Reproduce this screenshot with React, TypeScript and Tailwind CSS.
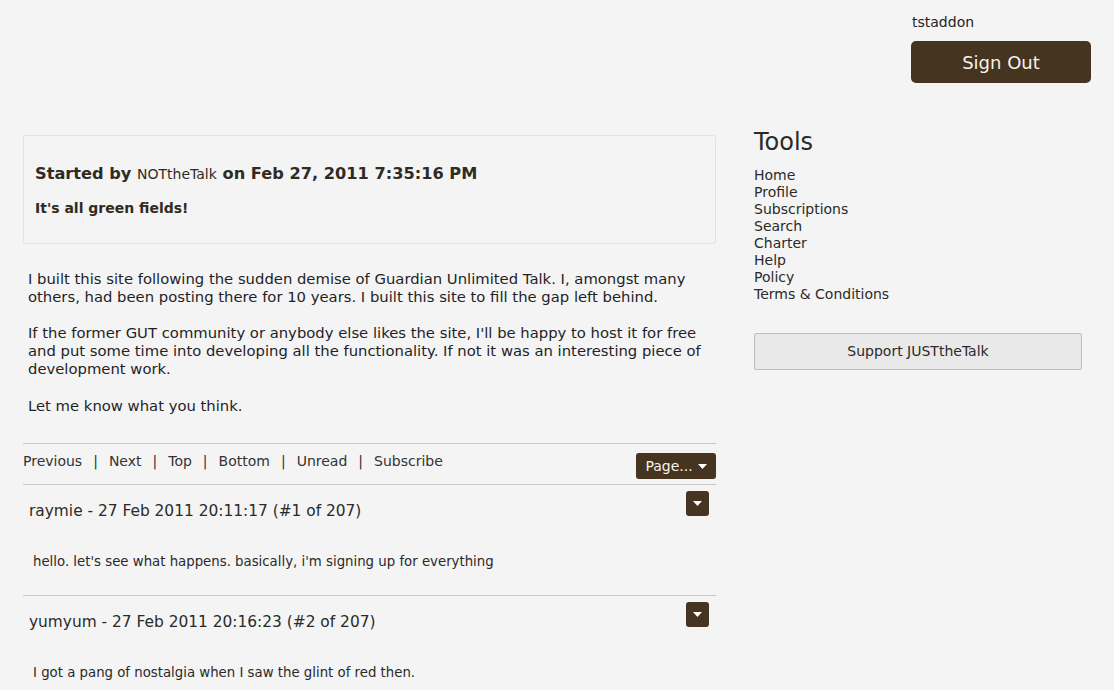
import { FC } from "react";

const Caret: FC = () => (
  <svg width="9" height="5" viewBox="0 0 9 5" className="inline-block">
    <path d="M0 0h9L4.5 5z" fill="#fff" />
  </svg>
);

const posts = [
  {
    who: "raymie",
    when: "27 Feb 2011 20:11:17",
    num: 1,
    body: "hello. let's see what happens. basically, i'm signing up for everything",
  },
  {
    who: "yumyum",
    when: "27 Feb 2011 20:16:23",
    num: 2,
    body: "I got a pang of nostalgia when I saw the glint of red then.",
  },
];

const tools = ["Home", "Profile", "Subscriptions", "Search", "Charter", "Help", "Policy", "Terms & Conditions"];
const navLinks = ["Previous", "Next", "Top", "Bottom", "Unread", "Subscribe"];

const App: FC = () => {
  return (
    <div
      className="min-h-[690px] w-[1114px] bg-[#f4f4f4] text-[#2b2a26] overflow-hidden"
      style={{ fontFamily: '"DejaVu Sans", Verdana, sans-serif' }}
    >
      <div className="flex justify-end pr-[23px] pt-[13px]">
        <div className="w-[180px]">
          <div className="text-[14px] leading-[18px] text-[#222] pl-[1px]">tstaddon</div>
          <button className="mt-[10px] w-[180px] h-[42px] rounded-[5px] bg-[#45341f] text-[#f7f2ea] text-[18px]">
            Sign Out
          </button>
        </div>
      </div>

      <div className="flex pl-[23px] pt-[52px] gap-[38px]">
        {/* main column */}
        <div className="w-[693px]">
          <div className="border border-[#e2e2e2] rounded-[3px] px-[11px] pt-[26px] pb-[26px]">
            <div className="text-[16.2px] leading-[24px] font-bold text-[#2f2b22]">
              Started by <span className="text-[14px] font-normal">NOTtheTalk</span> on Feb 27, 2011 7:35:16 PM
            </div>
            <div className="mt-[13px] text-[14px] leading-[18px] font-bold text-[#2f2b22]">It's all green fields!</div>
          </div>

          <div className="pt-[26px] pl-[5px] text-[14.8px] leading-[18px] text-[#1f1f28]">
            <p>
              I built this site following the sudden demise of Guardian Unlimited Talk. I, amongst many others, had been
              posting there for 10 years. I built this site to fill the gap left behind.
            </p>
            <p className="mt-[18px]">
              If the former GUT community or anybody else likes the site, I'll be happy to host it for free and put some
              time into developing all the functionality. If not it was an interesting piece of development work.
            </p>
            <p className="mt-[19px]">Let me know what you think.</p>
          </div>

          <div className="mt-[28px] border-t border-[#c9c9c9] flex items-start justify-between h-[41px]">
            <div className="pt-[8px] text-[14px] leading-[18px] text-[#333]">
              {navLinks.map((l, i) => (
                <span key={l}>
                  {i > 0 && <span className="mx-[11px] text-[#333]">|</span>}
                  {l}
                </span>
              ))}
            </div>
            <button className="mt-[9px] w-[80px] h-[26px] rounded-[3px] bg-[#45341f] text-[#f7f2ea] text-[14px] flex items-center justify-center gap-[5px]">
              Page... <Caret />
            </button>
          </div>

          {posts.map((p) => (
            <div key={p.num} className="border-t border-[#c9c9c9] h-[111px]">
              <div className="flex justify-between pr-[7px]">
                <div className="pt-[17px] pl-[6px] text-[15.4px] leading-[18px] text-[#2a2a2a]">
                  {p.who} - {p.when} (#{p.num} of 207)
                </div>
                <button className="mt-[6px] w-[23px] h-[25px] rounded-[3px] bg-[#45341f] flex items-center justify-center">
                  <Caret />
                </button>
              </div>
              <div className="pt-[34px] pl-[10px] text-[13.3px] leading-[16px] text-[#2a2a2a]">{p.body}</div>
            </div>
          ))}
        </div>

        {/* sidebar */}
        <div className="w-[328px] -mt-[8px]">
          <h2 className="text-[24px] leading-[30px] text-[#2b2a26]">Tools</h2>
          <ul className="mt-[10px] text-[14px] leading-[17px] text-[#2a2a2a]">
            {tools.map((t) => (
              <li key={t}>{t}</li>
            ))}
          </ul>
          <button className="mt-[30px] w-[328px] h-[37px] rounded-[2px] border border-[#bdbdbd] bg-[#e9e9e9] text-[14px] text-[#2a2a2a]">
            Support JUSTtheTalk
          </button>
        </div>
      </div>
    </div>
  );
};

export default App;
